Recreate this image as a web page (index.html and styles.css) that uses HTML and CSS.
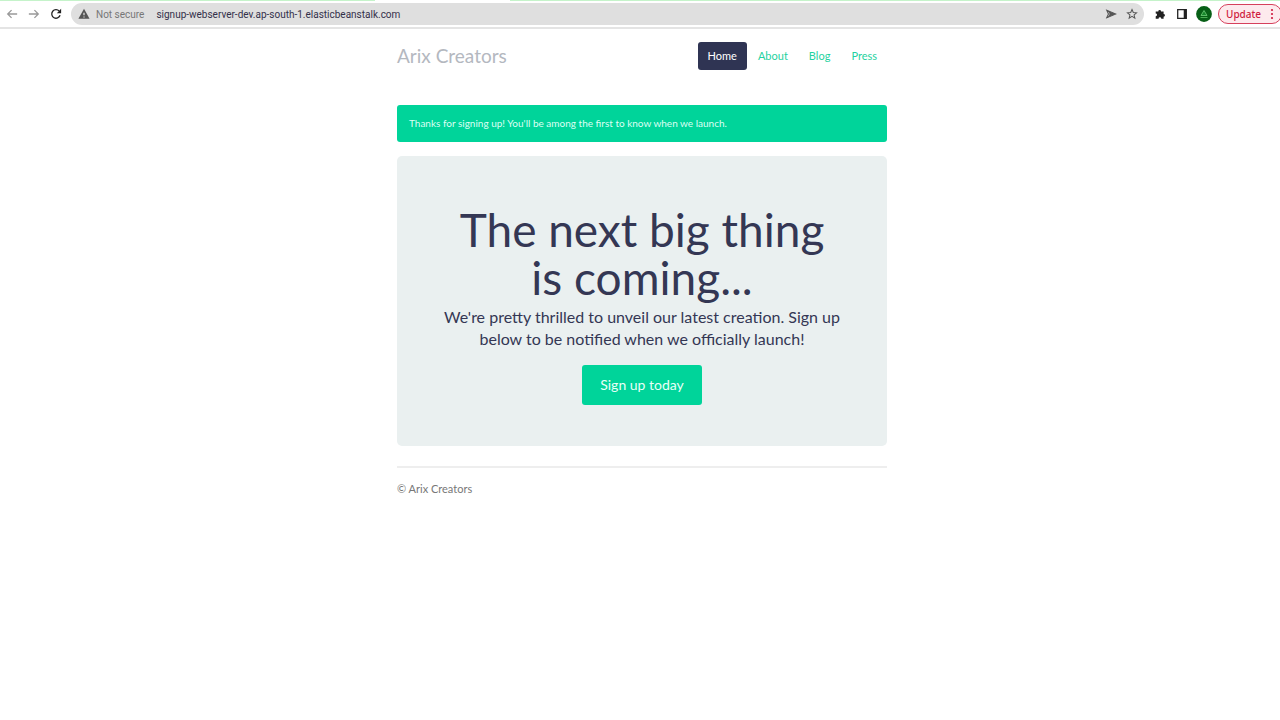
FILE: index.html
```html
<!DOCTYPE html>
<html lang="en">
<head>
<meta charset="utf-8">
<meta name="viewport" content="width=device-width, initial-scale=1">
<title>Arix Creators</title>
<link rel="stylesheet" href="styles.css">
</head>
<body>
<div class="tabs"><span class="tab-active"></span></div>
<div class="toolbar">
  <button class="tool" aria-label="Back"><svg class="icon muted" viewBox="0 0 14 14"><path d="M13 7H2M6.500 2.500L2 7l4.500 4.500"/></svg></button>
  <button class="tool" aria-label="Forward"><svg class="icon muted" viewBox="0 0 14 14"><path d="M1 7h11M7.500 2.500L12 7l-4.500 4.500"/></svg></button>
  <button class="tool" aria-label="Reload"><svg class="icon dark" viewBox="0 0 14 14"><path d="M11.800 8.500A5 5 0 1 1 10.800 3.600"/><path d="M13 1v5H8z" fill="currentColor" stroke="none"/></svg></button>
  <div class="address">
    <svg class="icon warn" viewBox="0 0 14 14"><path d="M7 1L13.500 12.500H.5z" fill="currentColor" stroke="none"/><path d="M7 5.500v3M7 9.800v1.200" stroke="#dfdfdf"/></svg>
    <span class="secure">Not secure</span>
    <input class="url" type="text" aria-label="Address" value="signup-webserver-dev.ap-south-1.elasticbeanstalk.com">
    <button class="tool" aria-label="Share"><svg class="icon grey" viewBox="0 0 14 14"><path d="M2 2.500L12.500 7L2 11.500L4 7zM4 7H10" stroke-width="1.200"/><path d="M2 2.500L12.500 7H6zM2 11.500L12.500 7H6z" fill="currentColor" stroke="none"/></svg></button>
    <button class="tool" aria-label="Bookmark"><svg class="icon grey" viewBox="0 0 14 14"><path d="M7 1.800l1.500 3.500 3.800.3-2.900 2.500.9 3.700L7 9.800l-3.300 2 .9-3.700-2.900-2.500 3.800-.3z" stroke-width="1.200"/></svg></button>
  </div>
  <button class="tool" aria-label="Extensions"><svg class="icon dark" viewBox="0 0 14 14"><path d="M2 4h3a1.600 1.600 0 1 1 3.200 0h3v3a1.600 1.600 0 1 1 0 3.200v2.300H8.500a1.600 1.600 0 0 0-3.200 0H2V9.500a1.600 1.600 0 0 0 0-3.200z" fill="currentColor" stroke="none"/></svg></button>
  <button class="tool" aria-label="Side panel"><svg class="icon dark" viewBox="0 0 14 14"><path d="M2 2h10v10H2z"/><path d="M9 2h3v10H9z" fill="currentColor" stroke="none"/></svg></button>
  <button class="tool" aria-label="Profile"><svg class="avatar" viewBox="0 0 16 16"><circle cx="8" cy="8" r="7.900" fill="#075f16"/><path d="M8 4.500L11 9.500H5z" fill="#16852a" stroke="#6fce79" stroke-width=".8"/><path d="M4.500 11.500h7" stroke="#48ad53"/></svg></button>
  <button class="update">Update<svg class="dots" viewBox="0 0 4 12"><circle cx="2" cy="2" r="1.100"/><circle cx="2" cy="6" r="1.100"/><circle cx="2" cy="10" r="1.100"/></svg></button>
</div>
<div class="container">
  <header class="header">
    <h3 class="brand">Arix Creators</h3>
    <nav class="nav">
      <a class="nav-link active" href="#">Home</a>
      <a class="nav-link" href="#">About</a>
      <a class="nav-link" href="#">Blog</a>
      <a class="nav-link" href="#">Press</a>
    </nav>
  </header>
  <div class="alert" role="status">Thanks for signing up! You'll be among the first to know when we launch.</div>
  <main class="hero">
    <h1 class="title">The next big thing is coming...</h1>
    <p class="lead">We're pretty thrilled to unveil our latest creation. Sign up below to be notified when we officially launch!</p>
    <button class="signup">Sign up today</button>
  </main>
  <footer class="footer">© Arix Creators</footer>
</div>
</body>
</html>
```
FILE: styles.css
```css
* { box-sizing: border-box; }
body {
  margin: 0;
  background: #fff;
  color: #343754;
  font-family: Lato, sans-serif;
  overflow-x: hidden;
}
button { border: 0; padding: 0; background: none; font-family: inherit; }

.tabs { height: 1px; padding-left: 375px; background: #c5f3ca; }
.tab-active { display: block; width: 135px; height: 1px; background: #fff; }
.toolbar {
  display: flex;
  align-items: center;
  gap: 8px;
  height: 28px;
  padding-left: 4px;
  border-bottom: 2px solid #e4e4e4;
  font-family: "Noto Sans", sans-serif;
}
.tool { display: flex; flex: none; justify-content: center; width: 15px; }
.icon { width: 12px; height: 12px; fill: none; stroke: currentColor; stroke-width: 1.5; }
.muted { color: #999; }
.grey { color: #555; }
.dark { color: #222; }
.warn { flex: none; color: #555; }
.avatar { width: 16px; height: 16px; flex: none; fill: none; }
.address {
  display: flex;
  flex: 1;
  align-items: center;
  height: 22px;
  gap: 6px;
  margin-left: 1px;
  padding: 0 5px 0 7px;
  border-radius: 11px;
  background: #dfdfdf;
}
.secure { color: #777; font-family: Roboto, sans-serif; font-size: 10px; white-space: nowrap; }
.url {
  flex: 1;
  min-width: 0;
  margin-left: 6px;
  padding: 0;
  border: 0;
  outline: 0;
  background: none;
  color: #33304a;
  font-family: Roboto, sans-serif;
  font-size: 10px;
}
.toolbar > .tool { margin-right: -1px; }
.update {
  display: flex;
  flex: none;
  align-items: center;
  justify-content: space-between;
  width: 64px;
  height: 20px;
  padding: 0 7px;
  margin-right: -2px;
  border: 1px solid #d6405c;
  border-radius: 10px;
  background: #fdeaed;
  color: #cf1c40;
  font-size: 10px;
  font-weight: 500;
}
.dots { width: 4px; height: 12px; fill: currentColor; }

.container { width: 100%; max-width: 494px; margin: 0 auto; padding: 13px 0 0 4px; }
.header { display: flex; align-items: center; justify-content: space-between; margin-bottom: 35px; }
.brand { margin: 0; color: #b4b8bf; font-size: 19px; font-weight: 400; line-height: 24px; }
.nav { display: flex; gap: 1px; }
.nav-link {
  padding: 7px 10px;
  border-radius: 3px;
  color: #1fd2a0;
  font-size: 11px;
  line-height: 14px;
  text-decoration: none;
}
.nav-link.active { background: #2f3453; color: #fff; }
.alert {
  margin-bottom: 14px;
  padding: 11px 12px;
  border-radius: 3px;
  background: #00d49a;
  color: #dcfff4;
  font-size: 10px;
  line-height: 15px;
}
.hero {
  padding: 50px 44px 41px;
  border-radius: 5px;
  background: #eaf0f0;
  text-align: center;
}
.title { margin: 0 0 4px; font-size: 46px; font-weight: 400; line-height: 48px; }
.lead { margin: 0 0 15px; font-size: 16px; line-height: 22px; }
.signup {
  padding: 10px 18px;
  border-radius: 3px;
  background: #00d49a;
  color: #e8fff8;
  font-size: 14px;
  line-height: 20px;
}
.footer {
  margin-top: 20px;
  padding-top: 14px;
  border-top: 2px solid #eee;
  color: #777;
  font-size: 11px;
  line-height: 14px;
}
```
